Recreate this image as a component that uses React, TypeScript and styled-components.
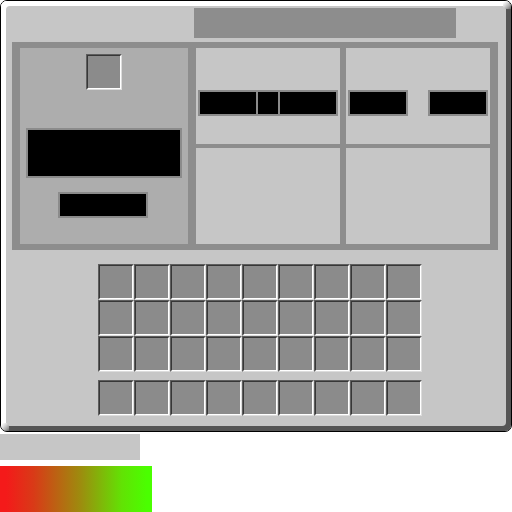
import React from "react";
import styled, { createGlobalStyle } from "styled-components";

const GlobalStyle = createGlobalStyle`
  *, *::before, *::after { box-sizing: border-box; }
  body { margin: 0; background: #fff; font-family: "Liberation Sans", Arial, sans-serif; }
`;

const Page = styled.main`
  display: flex;
  flex-direction: column;
  align-items: flex-start;
`;

const Window = styled.section`
  position: relative;
  width: 100%;
  border: 1px solid #000;
  border-radius: 7px;
  background: #555;
  overflow: hidden;
`;

const Bevel = styled.div`
  border: 5px solid;
  border-color: #fff #555 #555 #fff;
  background: linear-gradient(135deg, #fff 50%, #555 50%);
`;

const Surface = styled.div`
  display: flex;
  flex-direction: column;
  padding: 2px 8px 10px 6px;
  border-radius: 4px 0 4px 0;
  background: #c6c6c6;
`;

const Corner = styled.span<{ $place: "topRight" | "bottomLeft" }>`
  position: absolute;
  width: 8px;
  height: 8px;
  ${(p) => (p.$place === "topRight" ? "top: 0; right: 0;" : "bottom: 0; left: 0;")}
  border-radius: ${(p) => (p.$place === "topRight" ? "0 6px 0 4px" : "0 4px 0 6px")};
  background: linear-gradient(135deg, #fff 10%, #d8d8d8 40%, #a6a6a6 70%, #686868 100%);
`;

const TitleField = styled.input`
  align-self: flex-end;
  width: 54%;
  max-width: 262px;
  height: 30px;
  margin: 0 42px 4px 0;
  padding: 0 6px;
  border: 0;
  border-radius: 0;
  background: #8d8d8d;
`;

const Panel = styled.div`
  display: grid;
  grid-template-columns: minmax(0, 168fr) minmax(0, 294fr);
  gap: 8px;
  padding: 6px 8px;
  background: #8d8d8d;
`;

const Machine = styled.div`
  display: flex;
  flex-direction: column;
  align-items: center;
  padding: 6px;
  background: #adadad;
`;

const Sections = styled.div`
  display: grid;
  grid-template-columns: 1fr 1fr;
  grid-template-rows: 96px 96px;
  gap: 4px 6px;
`;

const Section = styled.div`
  display: flex;
  min-width: 0;
  align-items: flex-start;
  justify-content: space-between;
  padding: 42px 2px 0;
  background: #c6c6c6;
`;

const Field = styled.input<{ $width: string; $height?: number; $joined?: boolean }>`
  width: ${(p) => p.$width};
  min-width: 0;
  height: ${(p) => p.$height ?? 26}px;
  margin: 0;
  margin-left: ${(p) => (p.$joined ? "-2px" : "0")};
  padding: 0 4px;
  border: 2px solid #8b8b8b;
  border-radius: 0;
  background: #000;
  color: #fff;
`;

const MachineFields = styled.div`
  display: flex;
  width: 100%;
  flex-direction: column;
  align-items: center;
  gap: 14px;
  padding: 38px 0 20px;
`;

const SmallFieldRow = styled.div`
  display: flex;
  width: 100%;
  padding-left: 32px;
`;

const Slot = styled.button`
  display: block;
  width: 36px;
  height: 36px;
  padding: 0;
  border: 1px solid;
  border-color: #5e5e5e #dcdcdc #dcdcdc #5e5e5e;
  border-radius: 0;
  background: #8b8b8b;

  &::before {
    content: "";
    display: block;
    width: 34px;
    height: 34px;
    border: 1px solid;
    border-color: #373737 #fff #fff #373737;
  }
`;

const Inventory = styled.div`
  display: flex;
  flex-direction: column;
  align-self: center;
  gap: 8px;
  margin: 14px 0 0 10px;
`;

const SlotGrid = styled.div`
  display: grid;
  grid-template-columns: repeat(9, 36px);
`;

const Strip = styled.div`
  width: 140px;
  height: 26px;
  margin: 2px 0 6px;
  background: #c6c6c6;
`;

const Gauge = styled.div`
  width: 152px;
  height: 46px;
  background: linear-gradient(90deg, #f41a1a 4%, #d93a17 22%, #9d8c0e 53%, #62e204 80%, #4aff00 97%);
`;

const slots = (count: number, name: string) =>
  Array.from({ length: count }, (_, i) => (
    <Slot key={i} type="button" aria-label={`${name} slot ${i + 1}`} />
  ));

export default function App() {
  return (
    <>
      <GlobalStyle />
      <Page>
        <Window>
          <Bevel>
            <Surface>
              <TitleField aria-label="Name" />
              <Panel>
                <Machine>
                  <Slot type="button" aria-label="Input slot" />
                  <MachineFields>
                    <Field $width="100%" $height={50} aria-label="Display" />
                    <SmallFieldRow>
                      <Field $width="90px" aria-label="Amount" />
                    </SmallFieldRow>
                  </MachineFields>
                </Machine>
                <Sections>
                  <Section>
                    <Field $width="60px" aria-label="Minimum" />
                    <Field $width="24px" $joined aria-label="Operator" />
                    <Field $width="60px" $joined aria-label="Maximum" />
                  </Section>
                  <Section>
                    <Field $width="60px" aria-label="First value" />
                    <Field $width="60px" aria-label="Second value" />
                  </Section>
                  <Section />
                  <Section />
                </Sections>
              </Panel>
              <Inventory>
                <SlotGrid>{slots(27, "Inventory")}</SlotGrid>
                <SlotGrid>{slots(9, "Hotbar")}</SlotGrid>
              </Inventory>
            </Surface>
          </Bevel>
          <Corner $place="topRight" />
          <Corner $place="bottomLeft" />
        </Window>
        <Strip />
        <Gauge role="img" aria-label="Level gauge" />
      </Page>
    </>
  );
}
